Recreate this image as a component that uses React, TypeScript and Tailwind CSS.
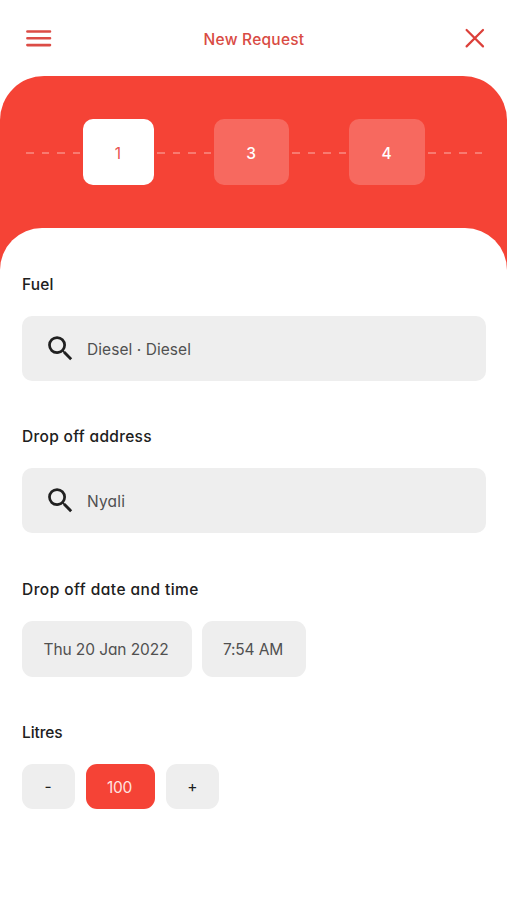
import type { ReactNode } from "react";

function Dashes() {
  return (
    <div className="mt-px flex w-[54px] shrink-0 justify-between">
      {[0, 1, 2, 3].map((n) => (
        <span key={n} className="h-[2px] w-[7.5px] bg-[#f87a70]" />
      ))}
    </div>
  );
}

function Field({ label, tracking, children }: { label: string; tracking: string; children: ReactNode }) {
  return (
    <section>
      <h2 className={`h-6 pt-px text-[15.5px] leading-6 font-medium whitespace-nowrap text-[#202020] ${tracking}`}>{label}</h2>
      <div className="mt-5 flex">{children}</div>
    </section>
  );
}

function SearchBox({ value, tracking }: { value: string; tracking: string }) {
  return (
    <div className="flex h-[65px] w-full items-center rounded-[10px] bg-[#eeeeee] pl-[21.5px]">
      <svg viewBox="0 0 24 24" className="size-[33px] fill-[#202020]">
        <path d="M15.5 14h-.79l-.28-.27A6.471 6.471 0 0 0 16 9.5 6.5 6.5 0 1 0 9.5 16c1.61 0 3.09-.59 4.23-1.57l.27.28v.79l5 4.99L20.49 19l-4.99-5zm-6 0C7.01 14 5 11.99 5 9.5S7.01 5 9.5 5 14 7.01 14 9.5 11.99 14 9.5 14z" />
      </svg>
      <span className={`ml-[10.5px] pt-[2px] text-[15.5px] whitespace-nowrap text-[#505050] ${tracking}`}>{value}</span>
    </div>
  );
}

export default function App() {
  return (
    <div className="flex h-[900px] w-[507px] flex-col overflow-hidden bg-white font-['Inter','Liberation_Sans',sans-serif] [font-feature-settings:'cv11']">
      <header className="flex h-[76px] shrink-0 items-center justify-between pr-[22px] pl-[26px]">
        <svg viewBox="0 0 26 20" className="h-5 w-[26px]" stroke="#dc4c46" strokeWidth="2.6" strokeLinecap="round">
          <path d="M1.4 3.5h22.6M1.4 10.3h22.6M1.4 17.1h22.6" />
        </svg>
        <h1 className="mr-[9px] pt-[3px] text-[15.5px] leading-6 font-medium tracking-[0.24px] whitespace-nowrap text-[#d94b44]">New Request</h1>
        <svg viewBox="0 0 20 20" className="size-5" stroke="#dc403a" strokeWidth="2.2" strokeLinecap="round">
          <path d="M1.6 2l16.4 16.4M18 2L1.6 18.4" />
        </svg>
      </header>

      <main className="flex grow flex-col rounded-t-[44px] bg-[linear-gradient(#f54336_240px,#ffffff_240px)]">
        <nav className="flex h-[152px] shrink-0 items-center gap-[3px] pl-[26px] text-[15.5px] font-medium text-white">
          <Dashes />
          <div className="flex h-[66px] w-[71px] items-center justify-center rounded-[10px] bg-white pt-[3px] pr-px font-normal text-[#e85550]">1</div>
          <Dashes />
          <div className="flex h-[66px] w-[75px] items-center justify-center rounded-[10px] bg-[#f7695f] pt-[3px] pr-px">3</div>
          <Dashes />
          <div className="flex h-[66px] w-[76px] items-center justify-center rounded-[10px] bg-[#f7695f] pt-[3px] pr-px">4</div>
          <Dashes />
        </nav>

        <div className="flex grow flex-col rounded-t-[42px] bg-white pt-[44px] pr-[21px] pl-[22px]">
          <div className="flex flex-col gap-[43.4px]">
            <Field label="Fuel" tracking="tracking-[0.15px]">
              <SearchBox value="Diesel · Diesel" tracking="tracking-[0.06px]" />
            </Field>
            <Field label="Drop off address" tracking="tracking-[0.32px]">
              <SearchBox value="Nyali" tracking="tracking-[0.2px]" />
            </Field>
            <Field label="Drop off date and time" tracking="tracking-[0.46px]">
              <div className="mr-[10px] flex h-14 w-[170px] items-center justify-center rounded-[11px] bg-[#eeeeee] pt-[2px] pr-[2px] text-[15.5px] tracking-[-0.08px] whitespace-nowrap text-[#505050]">Thu 20 Jan 2022</div>
              <div className="flex h-14 w-[104px] items-center justify-center rounded-[11px] bg-[#eeeeee] pt-[2px] pr-[2px] text-[15.5px] tracking-[-0.15px] whitespace-nowrap text-[#505050]">7:54 AM</div>
            </Field>
            <Field label="Litres" tracking="tracking-[-0.1px]">
              <button className="h-[45px] w-[53px] rounded-[11px] bg-[#eeeeee] pr-px text-[15.5px] text-[#202020]">-</button>
              <div className="mx-[11px] flex h-[45px] w-[69px] items-center justify-center rounded-[11px] bg-[#f54336] pt-[2px] pr-[2px] text-[15.5px] tracking-[-0.3px] text-[#ffe3e0]">100</div>
              <button className="h-[45px] w-[53px] rounded-[11px] bg-[#eeeeee] text-[15.5px] text-[#202020]">+</button>
            </Field>
          </div>
        </div>
      </main>
    </div>
  );
}
